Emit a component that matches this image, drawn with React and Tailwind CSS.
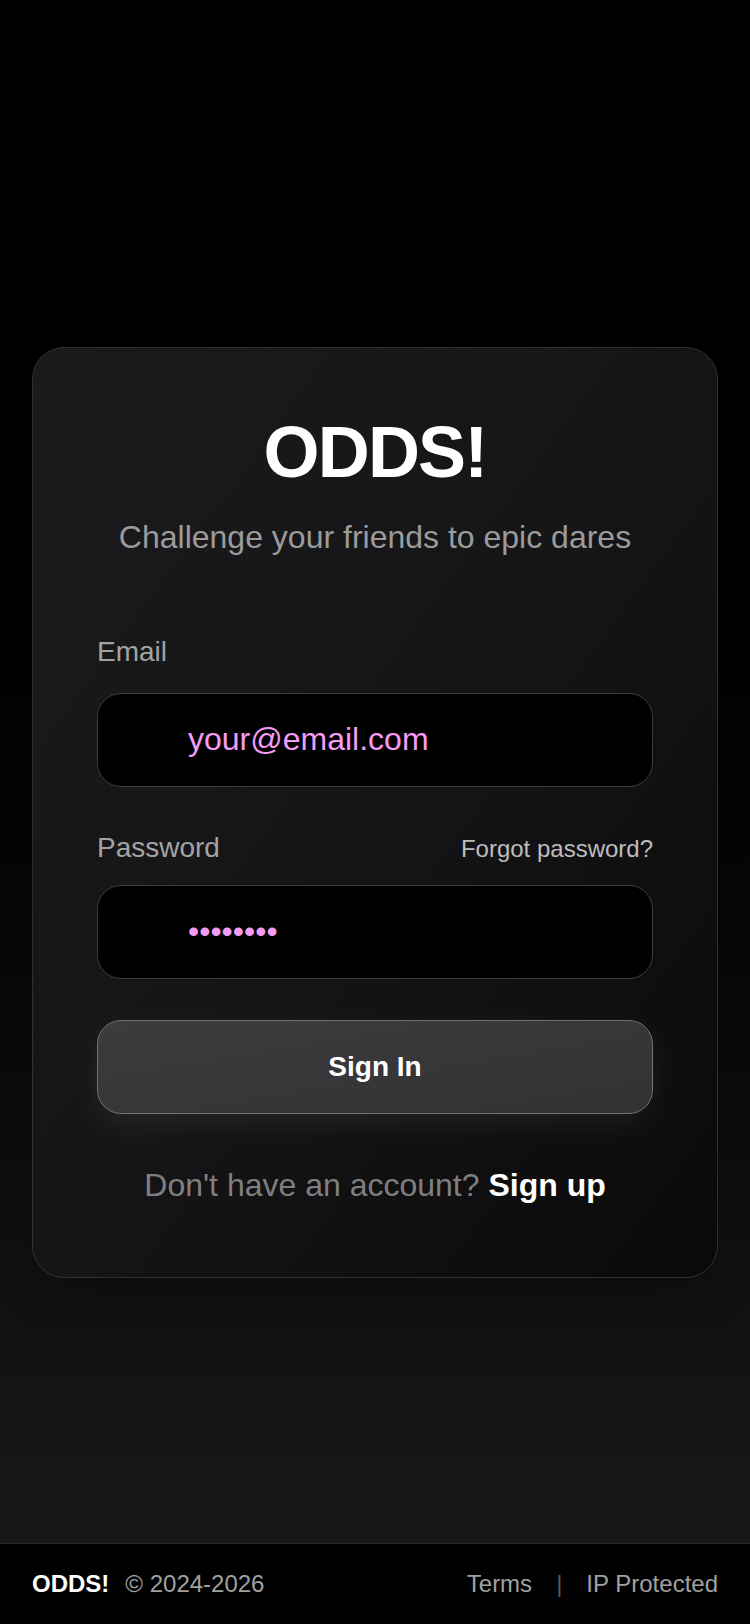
import { useState } from "react";

const App = () => {
  const [email, setEmail] = useState("");
  const [password, setPassword] = useState("");

  return (
    <div className="relative min-h-screen bg-gradient-to-b from-black to-[#1b1b1e] text-white font-['Liberation_Sans',Arial,sans-serif]">
      <main className="min-h-screen flex items-center justify-center px-8">
        {/* Login card */}
        <div className="w-full rounded-[32px] border border-[#303033] bg-gradient-to-br from-[#1b1b1e] via-[#151517] to-[#0a0a0b] px-16 pt-[68px] pb-[72px] shadow-2xl">
          <h1 className="text-center text-[72px] leading-[72px] font-bold tracking-tight text-white">ODDS!</h1>
          <p className="mt-[29px] text-center text-[32px] leading-[40px] text-[#9b9b9b]">
            Challenge your friends to epic dares
          </p>

          <form className="mt-[77px]" onSubmit={(e) => e.preventDefault()}>
            <label className="block text-[28px] leading-[36px] text-[#a3a3a3]">Email</label>
            <input
              type="email"
              value={email}
              onChange={(e) => setEmail(e.target.value)}
              placeholder="your@email.com"
              className="mt-[23px] block w-full h-[94px] rounded-3xl border-[1.5px] border-[#4a3a2f] bg-black pl-[90px] pr-6 text-[32px] text-[#f49cf4] placeholder:text-[#f49cf4] outline-none"
            />

            <div className="mt-[43px] flex items-baseline justify-between">
              <label className="text-[28px] leading-[36px] text-[#a3a3a3]">Password</label>
              <button type="button" className="text-[24px] leading-[32px] text-[#bdbdbd]">
                Forgot password?
              </button>
            </div>
            <input
              type="password"
              value={password}
              onChange={(e) => setPassword(e.target.value)}
              placeholder="••••••••"
              className="mt-[19px] block w-full h-[94px] rounded-3xl border-[1.5px] border-[#4a3a2f] bg-black pl-[90px] pr-6 text-[32px] text-[#f49cf4] placeholder:text-[#f49cf4] outline-none"
            />

            <button
              type="submit"
              className="mt-[41px] w-full h-[94px] rounded-3xl border-[1.5px] border-[#727275] bg-gradient-to-br from-[#3c3c3f] to-[#323235] text-[28px] font-bold text-white shadow-[0_10px_32px_rgba(255,255,255,0.07)]"
            >
              Sign In
            </button>
          </form>

          <p className="mt-[51px] text-center text-[32px] leading-[40px] text-[#7f7f7f]">
            Don't have an account? <button className="font-bold text-white">Sign up</button>
          </p>
        </div>
      </main>

      {/* Footer */}
      <footer className="fixed inset-x-0 bottom-0 h-[81px] border-t border-[#2a2a2c] bg-black px-8 flex items-center justify-between text-[24px]">
        <div className="flex items-center gap-4">
          <span className="font-bold text-white">ODDS!</span>
          <span className="text-[#a0a0a0]">© 2024-2026</span>
        </div>
        <div className="flex items-center gap-6 text-[#a0a0a0]">
          <span>Terms</span>
          <span className="text-[#5a5a5c]">|</span>
          <span>IP Protected</span>
        </div>
      </footer>
    </div>
  );
};

export default App;
